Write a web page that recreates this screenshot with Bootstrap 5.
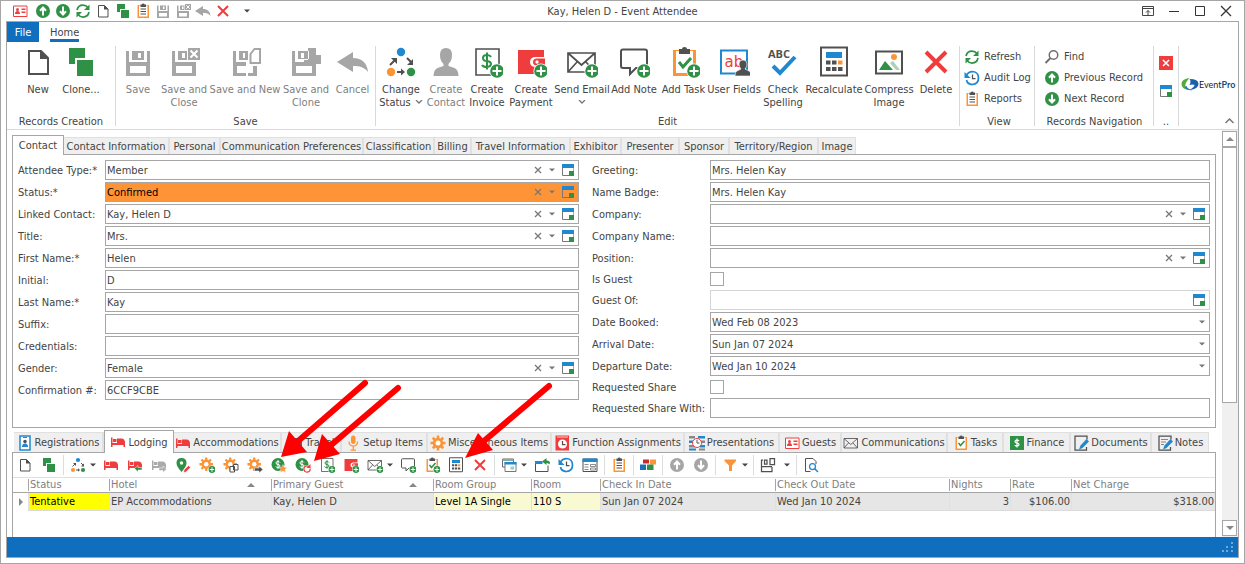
<!DOCTYPE html>
<html lang="en">
<head>
<meta charset="utf-8">
<meta name="viewport" content="width=device-width, initial-scale=1">
<title>Kay, Helen D - Event Attendee</title>
<link href="https://cdn.jsdelivr.net/npm/bootstrap@5.3.0/dist/css/bootstrap.min.css" rel="stylesheet">
<style>
:root{--edge:#a6a6a6;--ink:#444;--dim:#808080;--tab:#efefef;--soft:#d9d9d9;--brand:#106ebe}
body{font-family:"DejaVu Sans Condensed","DejaVu Sans",sans-serif;font-size:11px;line-height:13px;color:var(--ink);background:#fff}
svg{display:block;flex:none}
button{border:0;background:none;padding:0;color:inherit;line-height:13px}
.app-window{min-height:100vh;border:1px solid var(--edge);padding:0 5px 5px}
.i16{width:16px;height:16px}.i32{width:32px;height:32px}
.go{color:#2e9146}.stop{color:#ee3d3c}.idle{color:#a6a6a6}
.titlebar{height:20px;padding-left:4px}
.titlebar .quick{width:20px;height:20px;display:grid;place-items:center}
.titlebar .quick:first-child{margin-right:3px}
.titlebar .sys{width:26px;height:20px;display:grid;place-items:center}
.win-title{left:0;right:0;text-align:center;top:4px;pointer-events:none}
.app-frame{border:1px solid var(--edge)}
.file-tab{width:32px;height:20px;background:var(--brand);color:#fff}
.home-tab{height:20px;margin-left:11px;border-bottom:3px solid var(--brand);color:var(--ink);text-decoration:none;padding-top:4px}
.ribbon{height:88px;padding-top:4px;border-bottom:1px solid var(--soft)}
.ribbon-sep{width:1px;height:80px;background:var(--soft)}
.rgroup{height:82px;display:flex;flex-direction:column;justify-content:space-between}
.rgroup>.caption-line{text-align:center;white-space:nowrap}
.bigs{display:grid;padding:0 2px}
.bigs button{display:flex;flex-direction:column;align-items:center;white-space:nowrap;justify-self:center;width:0}
.bigs button svg{margin-bottom:5px}
.bigs button:disabled{color:var(--dim)}
.g-create .bigs{grid-template-columns:42px 44px;padding:0 12px 0 10px}
.g-save .bigs{grid-template-columns:40px 52px 70px 52px 41px}
.g-edit .bigs{grid-template-columns:46px 44px 38px 50px 52px 52px 47px 54px 44px 58px 52px 42px}
.smalls{display:grid;grid-auto-rows:21px}
.smalls button{display:flex;align-items:center;gap:4px;white-space:nowrap;text-align:left}
.g-view{width:74px;padding-left:4px}.g-nav{width:118px;padding-left:9px}.g-tiny{width:24px}
.tiny-stack{gap:14px;padding-top:10px}
.evp{font:9px Lato,sans-serif;color:#223;padding-left:2px}
.evp b{color:#184a86}
.workspace{padding:5px 6px 0 5px;min-width:0}
.strip{display:grid;position:relative;margin-bottom:-1px;z-index:1}
.strip a{display:flex;align-items:center;justify-content:center;gap:2px;white-space:nowrap;color:var(--ink);text-decoration:none;background:var(--tab);border-top:1px solid #e0e0e0;border-right:2px solid #e0e0e0;margin:2px 0 1px;min-width:0}
.strip a.current{background:#fff;border:1px solid var(--edge);border-bottom:0;margin:0}
.strip a:last-of-type{border-right-width:1px}
.strip-top{height:20px;grid-template-columns:52px 106px 51px 143px 71px 37px 99px 51px 58px 50px 89px 37px}
.strip-low{height:23px;padding-left:2px;grid-template-columns:90px 70px 108px 60px 86px 124px 133px 95px 62px 106px 56px 67px 81px 57px;margin-top:2px}
.page-box{border:1px solid var(--edge)}
.form-page{min-height:274px;padding:5px;display:grid;grid-template-columns:561fr 618fr;column-gap:13px;align-items:start}
.frow{display:grid;grid-template-columns:87px minmax(0,1fr);height:22px;align-items:start}
.fcol-right .frow{grid-template-columns:118px minmax(0,1fr)}
.frow.short{height:20px}
.frow>label{line-height:22px;white-space:nowrap}
.frow.short>label{line-height:20px}
.field{height:20px;border:1px solid var(--edge);display:flex;align-items:center;background:#fff}
.field input,.field select{appearance:none;border:0;outline:0;background:none;flex:1;min-width:0;height:18px;padding:0 0 0 1px;color:var(--ink);font:inherit}
.field.pale{border-color:#d4d4d4}
.field.hot{background:#ff9437}.field.hot select{color:#000}
.field button,.field .dd{width:14px;height:18px;display:grid;place-items:center;color:#777}
.field .pick{width:18px;margin-right:1px}
.tick{appearance:none;width:14px;height:14px;border:1px solid var(--edge);margin:2px 0 0;background:#fff}
.toolbar{height:25px;border-bottom:1px solid #e0e0e0}
.toolbar button{width:24px;height:24px;display:grid;place-items:center}
.toolbar .drop{width:9px;padding-right:5px}
.toolbar .drop.roomy{width:14px;padding-right:0}
.toolbar .bar{width:1px;height:20px;background:#dcdcdc;margin:0 2px}
.grid-table{table-layout:fixed;width:100%;border-collapse:separate;border-spacing:0}
.grid-table th{font-weight:400;color:var(--dim);height:15px;padding:0;border-bottom:1px solid var(--edge)}
.grid-table th>div{border-left:1px solid var(--edge);height:12px;line-height:12px;padding-left:1px;white-space:nowrap}
.grid-table th:first-child>div{border:0}
.grid-table td{height:18px;padding:0 1px;background:#e6e6e6;border-bottom:1px solid #dadada;border-left:1px solid #e0e0e0;white-space:nowrap}
.grid-table td:first-child{background:#fff;border:0;padding:0 0 0 5px}
.grid-table td.yellow{background:#ff0;color:#000}.grid-table td.cream{background:#fafad2;color:#000}
.c1{width:15px}.c2{width:81px}.c3,.c4{width:162px}.c5{width:98px}.c6{width:69px}.c7{width:175px}.c8{width:174px}.c9,.c10{width:61px}
.low-page{border-bottom:0}
.scroller{flex:none;width:16px;background:#f0f0f0;padding:1px 1px 1px 0}
.scroller button{height:16px;border:1px solid var(--edge);background:#fff;display:grid;place-items:center}
.scroller .thumb{flex:0 1 256px;border:1px solid var(--edge);background:#fff}
.statusbar{height:20px;background:var(--brand);padding:0 5px 4px}
.callouts{left:0;top:0;pointer-events:none;z-index:5}
</style>
</head>
<body>
<svg width="0" height="0" class="position-absolute" aria-hidden="true">
<defs>
<symbol id="plus" viewBox="0 0 32 32"><circle cx="26" cy="25" r="7.6" fill="#fff"/><circle cx="26" cy="25" r="6.8" fill="#2e9146"/><path d="M26 20.500v9M21.500 25h9" stroke="#fff" stroke-width="2"/></symbol>
<symbol id="new" viewBox="0 0 32 32"><path d="M7 5h12l7 7v16H7z" fill="#fff" stroke="#505050" stroke-width="2"/><path d="M18 4v9h9z" fill="#505050"/></symbol>
<symbol id="clone" viewBox="0 0 32 32"><path d="M4 2h16v10h-10v6H4z" fill="#2e9146"/><path d="M12 14h16v16H12z" fill="#2e9146"/></symbol>
<symbol id="save" viewBox="0 0 32 32"><path fill="#a6a6a6" fill-rule="evenodd" d="M4 5h3v11h18V5h3v25H4zM8 20v7h16v-7zM10 5h12v9H10zM16 7v5h3V7z"/></symbol>
<symbol id="saveclose" viewBox="0 0 32 32"><path fill="#a6a6a6" fill-rule="evenodd" d="M4 5h3v11h21v14H4zM8 20v7h16v-7zM10 5h9v9h-9zM14 7v5h3V7z"/><path fill="#a6a6a6" d="M20 2h12v12H20z"/><path d="M22.500 4.500l7 7m0-7l-7 7" stroke="#fff" stroke-width="2"/></symbol>
<symbol id="savenew" viewBox="0 0 32 32"><path fill="#a6a6a6" fill-rule="evenodd" d="M4 5h3v11h10v4H8v7h9v3H4zM10 5h9v9h-9zM14 7v5h2V7zM24 20h4v10h-9v-3h5z"/><path d="M21.500 8l4-5H31v14h-9.500z" fill="#fff" stroke="#a6a6a6" stroke-width="2"/></symbol>
<symbol id="saveclone" viewBox="0 0 32 32"><path fill="#a6a6a6" fill-rule="evenodd" d="M2 5h3v11h9v-2h4V2h8v7h5v9h-5v12H2zM6 20v7h16v-7zM8 5h11v8H8zM11 7v5h3V7z"/></symbol>
<symbol id="undo" viewBox="0 0 32 32"><path fill="#a6a6a6" d="M0 16L16 6v6c9 0 14 5 15 14-4-5-8-6-15-6v6z"/></symbol>
<symbol id="cross" viewBox="0 0 32 32"><path d="M6 6l20 20m0-20L6 26" stroke="#ee3d3c" stroke-width="4"/></symbol>
<symbol id="status" viewBox="0 0 32 32"><circle cx="16" cy="6" r="4.200" fill="#1f88cf"/><circle cx="6" cy="26" r="4.200" fill="#fb9437"/><circle cx="26" cy="26" r="4.200" fill="#2e9146"/><path d="M5 19l5-5M22 12l5 5M12 26h5" stroke="#505050" stroke-width="2"/><path d="M6 12h6v6zM28 13v6h-6zM16 22.500l4 3.500-4 3.500z" fill="#505050"/></symbol>
<symbol id="person" viewBox="0 0 32 32"><path fill="#a6a6a6" d="M10 9q0-7 6-7t6 7q0 6-3.500 9v2l6 2q4 2 4 8h-25q0-6 4-8l6-2v-2Q10 15 10 9z"/></symbol>
<symbol id="invoice" viewBox="0 0 32 32"><path d="M5 3h23v26H5z" fill="#fff" stroke="#505050" stroke-width="1.600"/><path d="M20 11q-1-2-4-2-4 0-4 3t4 3q4 .5 4 3t-4 3q-4 0-5-2M16 6.500v17" fill="none" stroke="#2e9146" stroke-width="2"/><use href="#plus"/></symbol>
<symbol id="wallet" viewBox="0 0 32 32"><path d="M3 4h26v24H3z" fill="#ee3d3c"/><path d="M30 11h-9q-6 0-6 5t6 5h9z" fill="#fff"/><path d="M30 12.500h-8q-4 0-4 3.500t4 3.500h8z" fill="#ee3d3c"/><circle cx="22" cy="16" r="1.700" fill="#fff"/><use href="#plus"/></symbol>
<symbol id="envelope" viewBox="0 0 32 32"><path d="M2 7h27v19H2zL15.500 19 29 7M2 26l9-10M29 26l-9-10" fill="none" stroke="#505050" stroke-width="1.700"/></symbol>
<symbol id="mail" viewBox="0 0 32 32"><use href="#envelope"/><use href="#plus"/></symbol>
<symbol id="note" viewBox="0 0 32 32"><path d="M5 3.500h22q2 0 2 2V20q0 2-2 2h-9l-6 6v-6H5q-2 0-2-2V5.500q0-2 2-2z" fill="#fff" stroke="#505050" stroke-width="2"/><use href="#plus"/></symbol>
<symbol id="board" viewBox="0 0 32 32"><path d="M5 4h23v26H5z" fill="#fb9437"/><path d="M8 5h17v22H8z" fill="#fff"/><path d="M11 3h3q0-2 2.500-2T19 3h3v5H11z" fill="#505050"/></symbol>
<symbol id="tasks" viewBox="0 0 32 32"><use href="#board"/><path d="M11 16l4 5 8-9" fill="none" stroke="#2e9146" stroke-width="3"/></symbol>
<symbol id="task" viewBox="0 0 32 32"><use href="#tasks"/><use href="#plus"/></symbol>
<symbol id="reports" viewBox="0 0 32 32"><use href="#board"/><path d="M11 12h11M11 17h11M11 22h11" stroke="#505050" stroke-width="2"/></symbol>
<symbol id="fields" viewBox="0 0 32 32"><path d="M3 4.500h26v23H3z" fill="#fff" stroke="#1f88cf" stroke-width="2"/><text x="6.500" y="21" font-family="DejaVu Sans" font-size="15" fill="#ee3d3c">ab</text><path fill="#505050" stroke="#fff" stroke-width=".6" d="M21 18q0-4 4-4t4 4q0 3-2 5l4 2q2 1 2 5H17q0-4 2-5l4-2q-2-2-2-5z"/></symbol>
<symbol id="spell" viewBox="0 0 32 32"><text x="1" y="12" font-family="Open Sans" font-weight="700" font-size="11" fill="#505050">ABC</text><path d="M6 20l7 7 15-16" fill="none" stroke="#1f88cf" stroke-width="4"/></symbol>
<symbol id="calc" viewBox="0 0 32 32"><path d="M3 1.500h26v28H3z" fill="#fff" stroke="#505050" stroke-width="2"/><path d="M8 6h16v6H8z" fill="#1f88cf"/><path d="M8 14.500h4.500v4H8zM14 14.500h4.500v4H14zM8 21h4.500v4H8zM14 21h4.500v4H14zM20 21h4.500v4H20z" fill="#505050"/><path d="M20 14.500h4.500v4H20z" fill="#fb9437"/></symbol>
<symbol id="image" viewBox="0 0 32 32"><path d="M3 5.500h26v22H3z" fill="#fff" stroke="#505050" stroke-width="2"/><path d="M6 24l6-9 8 9z" fill="#2e9146"/><path d="M17 17l3-2 7 9h-4z" fill="#a9d3b3"/><circle cx="21" cy="11" r="3" fill="#fb9437"/></symbol>
<symbol id="up" viewBox="0 0 32 32"><circle cx="16" cy="16" r="14" fill="currentColor"/><path d="M16 25V10M10 15.500L16 9l6 6.500" fill="none" stroke="#fff" stroke-width="4"/></symbol>
<symbol id="down" viewBox="0 0 32 32"><circle cx="16" cy="16" r="14" fill="currentColor"/><path d="M16 7v15M10 16.500L16 23l6-6.500" fill="none" stroke="#fff" stroke-width="4"/></symbol>
<symbol id="refresh" viewBox="0 0 32 32"><path d="M4 14q2-10 12-10 6 0 10 5M28 18q-2 10-12 10-6 0-10-5" fill="none" stroke="#2e9146" stroke-width="3.500"/><path d="M29 3v11H18zM3 29V18h11z" fill="#2e9146"/></symbol>
<symbol id="history" viewBox="0 0 32 32"><path d="M5 10q4-7 12-7 12 1 12 13T17 29Q7 29 5 20" fill="none" stroke="#1f88cf" stroke-width="3.500"/><path d="M1 4v12h12z" fill="#1f88cf"/><path d="M17 9v8h6" fill="none" stroke="#505050" stroke-width="2.500"/></symbol>
<symbol id="find" viewBox="0 0 32 32"><circle cx="19" cy="12" r="8.500" fill="none" stroke="#707070" stroke-width="3"/><path d="M13 18L3 28" stroke="#707070" stroke-width="4"/></symbol>
<symbol id="idcard" viewBox="0 0 32 32"><path d="M3 6h27v21H3z" fill="#fff" stroke="#ee3d3c" stroke-width="2"/><circle cx="11" cy="13" r="3" fill="#ee3d3c"/><path d="M6 22q0-6 5-6t5 6zM19 11h8v3h-8zM19 17h8v3h-8z" fill="#ee3d3c"/></symbol>
<symbol id="window" viewBox="0 0 14 14"><path d="M1 1h12v4H1z" fill="#1f88cf"/><path d="M1.500 5v7.500H8" fill="none" stroke="#777" stroke-width="1"/><path d="M12.500 5v3" stroke="#aaa"/><path d="M8 8h5v5H8z" fill="#2e9146"/></symbol>
<symbol id="caret" viewBox="0 0 6 4"><path d="M0 .5h6L3 3.500z" fill="currentColor"/></symbol>
<symbol id="tri" viewBox="0 0 8 4"><path d="M0 4h8L4 0z" fill="#888"/></symbol>
<symbol id="clear" viewBox="0 0 8 8"><path d="M1 1l6 6m0-6L1 7" stroke="#777" stroke-width="1.300"/></symbol>
<symbol id="bed" viewBox="0 0 32 32"><path d="M2 7h3v11h22v-3h3v11h-3v-4H5v4H2zM6 10h7v6H6zM14 9h9q7 0 7 9H14z" fill="currentColor"/></symbol>
<symbol id="bedin" viewBox="0 0 32 32"><g color="#ee3d3c"><use href="#bed"/></g><path d="M15 23l7-6v4h8v5h-8v4z" fill="#2e9146" stroke="#fff"/></symbol>
<symbol id="bedout" viewBox="0 0 32 32"><g color="#aaa"><use href="#bed"/></g><path d="M31 24l-7-6v4h-8v5h8v4z" fill="#aaa" stroke="#fff"/></symbol>
<symbol id="pin" viewBox="0 0 32 32"><path d="M13 30Q3 19 3 12 3 2 13 2t10 10q0 7-10 18z" fill="#2e9146"/><circle cx="13" cy="12" r="3.500" fill="#fff"/><path d="M18 26l9-9 4 4-9 9-5 1z" fill="#ee3d3c" stroke="#fff"/></symbol>
<symbol id="gear" viewBox="0 0 32 32"><g stroke="#fb9437" stroke-width="5"><path d="M16 1v30M1 16h30M5.500 5.500l21 21M26.500 5.500l-21 21"/></g><circle cx="16" cy="16" r="10.500" fill="#fb9437"/><circle cx="16" cy="16" r="5" fill="#fff"/></symbol>
<symbol id="gearplus" viewBox="0 0 32 32"><use href="#gear" width="29" height="29"/><use href="#plus"/></symbol>
<symbol id="gearcopy" viewBox="0 0 32 32"><use href="#gear" width="29" height="29"/><path d="M14 19h9v11h-9zM21 15h9v11h-9z" fill="#fff" stroke="#505050" stroke-width="2"/></symbol>
<symbol id="geargo" viewBox="0 0 32 32"><use href="#gear" width="29" height="29"/><path d="M32 25l-8-7v4h-9v6h9v4z" fill="#505050" stroke="#fff"/></symbol>
<symbol id="coin" viewBox="0 0 32 32"><circle cx="14" cy="15" r="13" fill="#2e9146"/><path d="M18 11q-1-2-4-2-4 0-4 3t4 3 4 3-4 3-4-2M14 6v18" fill="none" stroke="#fff" stroke-width="2"/></symbol>
<symbol id="coinstar" viewBox="0 0 32 32"><use href="#coin"/><path d="M24 15l2.500 5.500 6 .5-4.500 4 1.500 6-5.500-3-5.500 3 1.500-6-4.500-4 6-.5z" fill="#fb9437" stroke="#fff" stroke-width=".8"/></symbol>
<symbol id="coinredo" viewBox="0 0 32 32"><use href="#coin"/><circle cx="24" cy="24" r="8" fill="#fff"/><path d="M28 19q-5-3-9 1-3 5 1 9 5 3 9-1 2-2 1-5" fill="none" stroke="#ee3d3c" stroke-width="2.500"/><path d="M31 14v8h-8z" fill="#ee3d3c"/></symbol>
<symbol id="windows" viewBox="0 0 32 32"><path d="M3 4h22v16H3z" fill="#fff" stroke="#666" stroke-width="2"/><path d="M3 4h22v4H3z" fill="#8aa"/><path d="M8 11h22v18H8z" fill="#fff" stroke="#777" stroke-width="2"/><path d="M7 10h24v5H7z" fill="#1f88cf"/><path d="M19 19h7v6h-7z" fill="#9cc"/></symbol>
<symbol id="open" viewBox="0 0 32 32"><path d="M3 12v17h25V17" fill="none" stroke="#505050" stroke-width="2"/><path d="M2 8h15v6H2z" fill="#1f88cf"/><path d="M32 10q-3-4-7-3V2l-9 7 9 7v-4q4 0 6 3z" fill="#2e9146"/></symbol>
<symbol id="form" viewBox="0 0 32 32"><path d="M2 4h28v25H2z" fill="#fff" stroke="#505050" stroke-width="2"/><path d="M1 3h30v7H1z" fill="#1f88cf"/><path d="M5 15h8M5 20h8M5 25h8M17 15h10v4H17zM17 22h10v4H17z" fill="none" stroke="#666" stroke-width="1.500"/></symbol>
<symbol id="blocks" viewBox="0 0 32 32"><path d="M6 5h12v8H6z" fill="#c72b2b"/><path d="M20 5h12v10H20z" fill="#fb9437"/><path d="M0 15h12v11H0z" fill="#1b70b8"/><path d="M14 15h13v11H14z" fill="#2e9146"/></symbol>
<symbol id="funnel" viewBox="0 0 32 32"><path d="M5 5h23v3l-8 9v11h-6V17L5 8z" fill="#fb9437"/></symbol>
<symbol id="layout" viewBox="0 0 32 32"><path d="M6 6H3v23h21v-9M3 19h21M9 6v8h5V6zM20 3h9v12h-9z" fill="none" stroke="#505050" stroke-width="2.500"/></symbol>
<symbol id="preview" viewBox="0 0 32 32"><path d="M26 14V9l-6-6H5v26h10" fill="none" stroke="#505050" stroke-width="2"/><circle cx="19" cy="19" r="6" fill="#fff" stroke="#1f88cf" stroke-width="2.500"/><path d="M23 23l7 7" stroke="#1f88cf" stroke-width="3"/></symbol>
<symbol id="badge" viewBox="0 0 32 32"><path d="M6 2h20v28H6z" fill="#fff" stroke="#1f88cf" stroke-width="3"/><path d="M12 5h8" stroke="#1f88cf" stroke-width="2"/><circle cx="16" cy="13" r="3.500" fill="#505050"/><path d="M10 24q0-7 6-7t6 7z" fill="#1f88cf"/></symbol>
<symbol id="travel" viewBox="0 0 32 32"><path d="M4 6h8v20H4zM16 6h14v20H16z" fill="#1b70b8"/></symbol>
<symbol id="mic" viewBox="0 0 32 32"><rect x="12" y="1" width="9" height="17" rx="4.500" fill="#fb9437"/><path d="M8 13q0 9 8.500 9t8.500-9M16.500 22v8M11 30h11" fill="none" stroke="#fb9437" stroke-width="2.500"/></symbol>
<symbol id="clockbook" viewBox="0 0 32 32"><path d="M3 1h27v30H3z" fill="#ee3d3c"/><path d="M6 4h22" stroke="#fff" stroke-width="1.500"/><circle cx="17" cy="18" r="9" fill="#fff"/><path d="M17 12v7h6" fill="none" stroke="#505050" stroke-width="2.500"/></symbol>
<symbol id="present" viewBox="0 0 32 32"><path d="M0 2h12v5H0zM20 11h12v5H20zM0 20h12v5H0zM20 27h12v4H20z" fill="#888"/><path d="M18 2h14v5H18zM0 11h10v5H0zM22 20h10v5H22zM0 27h14v4H0z" fill="#1f88cf"/><circle cx="16" cy="16" r="9" fill="#fff" stroke="#ee3d3c" stroke-width="2"/><path d="M16 10v6h5" fill="none" stroke="#505050" stroke-width="2"/></symbol>
<symbol id="finance" viewBox="0 0 32 32"><path d="M2 2h28v28H2z" fill="#2e9146"/><path d="M20 12q-1-2-4-2-4 0-4 3t4 3 4 3-4 3-4-2M16 7v18" fill="none" stroke="#fff" stroke-width="2.500"/></symbol>
<symbol id="doc" viewBox="0 0 32 32"><path d="M28 9V2H4v28h23v-6" fill="none" stroke="#505050" stroke-width="2.500"/><path d="M12 29l3-8L27 8l5 5-13 13z" fill="#1f88cf"/></symbol>
<symbol id="notes" viewBox="0 0 32 32"><use href="#doc"/><path d="M8 9h14M8 14h10M8 19h6" stroke="#888" stroke-width="2"/></symbol>
</defs>
</svg>

<div class="app-window d-flex flex-column position-relative">
  <header class="titlebar d-flex align-items-center">
    <button class="quick" aria-label="Attendee"><svg class="i16"><use href="#idcard"/></svg></button>
    <button class="quick go" aria-label="Previous"><svg class="i16"><use href="#up"/></svg></button>
    <button class="quick go" aria-label="Next"><svg class="i16"><use href="#down"/></svg></button>
    <button class="quick" aria-label="Refresh"><svg class="i16"><use href="#refresh"/></svg></button>
    <button class="quick" aria-label="New"><svg class="i16"><use href="#new"/></svg></button>
    <button class="quick" aria-label="Clone"><svg class="i16"><use href="#clone"/></svg></button>
    <button class="quick" aria-label="Reports"><svg class="i16"><use href="#reports"/></svg></button>
    <button class="quick" aria-label="Save"><svg class="i16"><use href="#save"/></svg></button>
    <button class="quick" aria-label="Save and Close"><svg class="i16"><use href="#saveclose"/></svg></button>
    <button class="quick" aria-label="Undo"><svg class="i16"><use href="#undo"/></svg></button>
    <button class="quick" aria-label="Delete"><svg class="i16"><use href="#cross"/></svg></button>
    <button class="quick ms-1" aria-label="More"><svg width="6" height="4"><use href="#caret"/></svg></button>
    <div class="win-title position-absolute">Kay, Helen D - Event Attendee</div>
    <div class="ms-auto d-flex">
      <button class="sys" aria-label="Ribbon options"><svg width="12" height="12" viewBox="0 0 12 12" fill="none" stroke="#444"><path d="M.5 1.500h11v9H.5zM.5 3.500h11M6 10V5.500M4 7.500l2-2 2 2"/></svg></button>
      <button class="sys" aria-label="Minimize"><svg width="12" height="12" viewBox="0 0 12 12" stroke="#333"><path d="M1 6.500h10"/></svg></button>
      <button class="sys" aria-label="Maximize"><svg width="12" height="12" viewBox="0 0 12 12" fill="none" stroke="#333"><path d="M1.500 1.500h9v9h-9z"/></svg></button>
      <button class="sys" aria-label="Close"><svg width="12" height="12" viewBox="0 0 12 12" stroke="#333" stroke-width="1.300"><path d="M1 1l10 10M11 1L1 11"/></svg></button>
    </div>
  </header>

  <div class="app-frame flex-grow-1 d-flex flex-column">
    <nav class="d-flex">
      <button class="file-tab">File</button>
      <a href="#" class="home-tab">Home</a>
    </nav>
    <section class="ribbon d-flex">
      <div class="rgroup g-create">
        <div class="bigs">
          <button><svg class="i32"><use href="#new"/></svg>New</button>
          <button><svg class="i32"><use href="#clone"/></svg>Clone...</button>
        </div>
        <div class="caption-line">Records Creation</div>
      </div>
      <div class="ribbon-sep"></div>
      <div class="rgroup g-save">
        <div class="bigs">
          <button disabled><svg class="i32"><use href="#save"/></svg>Save</button>
          <button disabled><svg class="i32"><use href="#saveclose"/></svg><span>Save and<br>Close</span></button>
          <button disabled><svg class="i32"><use href="#savenew"/></svg>Save and New</button>
          <button disabled><svg class="i32"><use href="#saveclone"/></svg><span>Save and<br>Clone</span></button>
          <button disabled><svg class="i32"><use href="#undo"/></svg>Cancel</button>
        </div>
        <div class="caption-line">Save</div>
      </div>
      <div class="ribbon-sep"></div>
      <div class="rgroup g-edit">
        <div class="bigs">
          <button><svg class="i32"><use href="#status"/></svg><span>Change</span><span class="d-flex align-items-center gap-1">Status <svg class="m-0" width="8" height="5" viewBox="0 0 8 5" fill="none" stroke="#777" stroke-width="1.300"><path d="M1 0l3 3 3-3"/></svg></span></button>
          <button disabled><svg class="i32"><use href="#person"/></svg><span>Create<br>Contact</span></button>
          <button><svg class="i32"><use href="#invoice"/></svg><span>Create<br>Invoice</span></button>
          <button><svg class="i32"><use href="#wallet"/></svg><span>Create<br>Payment</span></button>
          <button><svg class="i32"><use href="#mail"/></svg>Send Email<svg class="mt-1" width="8" height="5" viewBox="0 0 8 5" fill="none" stroke="#777" stroke-width="1.300"><path d="M1 0l3 3 3-3"/></svg></button>
          <button><svg class="i32"><use href="#note"/></svg>Add Note</button>
          <button><svg class="i32"><use href="#task"/></svg>Add Task</button>
          <button><svg class="i32"><use href="#fields"/></svg>User Fields</button>
          <button><svg class="i32"><use href="#spell"/></svg><span>Check<br>Spelling</span></button>
          <button><svg class="i32"><use href="#calc"/></svg>Recalculate</button>
          <button><svg class="i32"><use href="#image"/></svg><span>Compress<br>Image</span></button>
          <button><svg class="i32"><use href="#cross"/></svg>Delete</button>
        </div>
        <div class="caption-line">Edit</div>
      </div>
      <div class="ribbon-sep"></div>
      <div class="rgroup g-view">
        <div class="smalls">
          <button><svg class="i16"><use href="#refresh"/></svg>Refresh</button>
          <button><svg class="i16"><use href="#history"/></svg>Audit Log</button>
          <button><svg class="i16"><use href="#reports"/></svg>Reports</button>
        </div>
        <div class="caption-line">View</div>
      </div>
      <div class="ribbon-sep"></div>
      <div class="rgroup g-nav">
        <div class="smalls">
          <button><svg class="i16"><use href="#find"/></svg>Find</button>
          <button><svg class="i16 go"><use href="#up"/></svg>Previous Record</button>
          <button><svg class="i16 go"><use href="#down"/></svg>Next Record</button>
        </div>
        <div class="caption-line pe-2">Records Navigation</div>
      </div>
      <div class="ribbon-sep"></div>
      <div class="rgroup g-tiny">
        <div class="tiny-stack d-flex flex-column align-items-center">
          <button aria-label="Close record"><svg width="14" height="14" viewBox="0 0 14 14"><path d="M0 0h14v14H0z" fill="#ee3d3c"/><path d="M4 4l6 6m0-6l-6 6" stroke="#fff" stroke-width="1.600"/></svg></button>
          <button aria-label="Open window"><svg width="14" height="14"><use href="#window"/></svg></button>
        </div>
        <div class="caption-line">..</div>
      </div>
      <div class="ribbon-sep"></div>
      <div class="rgroup flex-grow-1 align-items-end">
        <div class="d-flex align-items-center evp w-100 pt-4 mt-2">
          <svg width="18" height="13" viewBox="0 0 17 13"><path d="M8 0Q0 1 0 6t7 6q-4-3-3-6t4-6z" fill="#58a83c"/><path d="M3 9q3 4 8 3-5-1-6-4z" fill="#2a7ac0"/><path d="M8 1q9 0 9 5t-9 6q5-3 5-5-2-1-5 0 2-4 0-6z" fill="#1a5fa8"/></svg>
          <span>Event<b>Pro</b></span>
        </div>
        <button class="p-1" aria-label="Collapse ribbon"><svg width="9" height="6" viewBox="0 0 9 6" fill="none" stroke="#777" stroke-width="1.500"><path d="M.5 5l4-4 4 4"/></svg></button>
      </div>
    </section>

    <main class="d-flex flex-grow-1">
      <div class="workspace flex-grow-1 d-flex flex-column">
        <nav class="strip strip-top">
          <a href="#" class="current">Contact</a><a href="#">Contact Information</a><a href="#">Personal</a><a href="#">Communication Preferences</a><a href="#">Classification</a><a href="#">Billing</a><a href="#">Travel Information</a><a href="#">Exhibitor</a><a href="#">Presenter</a><a href="#">Sponsor</a><a href="#">Territory/Region</a><a href="#">Image</a>
        </nav>
        <form class="page-box form-page">
          <div>
            <div class="frow"><label for="f1">Attendee Type:*</label><div class="field"><select id="f1"><option>Member</option></select><button type="button" aria-label="Clear"><svg width="8" height="8"><use href="#clear"/></svg></button><span class="dd"><svg width="6" height="4"><use href="#caret"/></svg></span><button type="button" class="pick" aria-label="Open"><svg width="14" height="14"><use href="#window"/></svg></button></div></div>
            <div class="frow"><label for="f2">Status:*</label><div class="field hot"><select id="f2"><option>Confirmed</option></select><button type="button" aria-label="Clear"><svg width="8" height="8"><use href="#clear"/></svg></button><span class="dd"><svg width="6" height="4"><use href="#caret"/></svg></span><button type="button" class="pick" aria-label="Open"><svg width="14" height="14"><use href="#window"/></svg></button></div></div>
            <div class="frow"><label for="f3">Linked Contact:</label><div class="field"><select id="f3"><option>Kay, Helen D</option></select><button type="button" aria-label="Clear"><svg width="8" height="8"><use href="#clear"/></svg></button><span class="dd"><svg width="6" height="4"><use href="#caret"/></svg></span><button type="button" class="pick" aria-label="Open"><svg width="14" height="14"><use href="#window"/></svg></button></div></div>
            <div class="frow"><label for="f4">Title:</label><div class="field"><select id="f4"><option>Mrs.</option></select><button type="button" aria-label="Clear"><svg width="8" height="8"><use href="#clear"/></svg></button><span class="dd"><svg width="6" height="4"><use href="#caret"/></svg></span><button type="button" class="pick" aria-label="Open"><svg width="14" height="14"><use href="#window"/></svg></button></div></div>
            <div class="frow"><label for="f5">First Name:*</label><div class="field"><input id="f5" value="Helen"></div></div>
            <div class="frow"><label for="f6">Initial:</label><div class="field"><input id="f6" value="D"></div></div>
            <div class="frow"><label for="f7">Last Name:*</label><div class="field"><input id="f7" value="Kay"></div></div>
            <div class="frow"><label for="f8">Suffix:</label><div class="field"><input id="f8"></div></div>
            <div class="frow"><label for="f9">Credentials:</label><div class="field"><input id="f9"></div></div>
            <div class="frow"><label for="f10">Gender:</label><div class="field"><select id="f10"><option>Female</option></select><button type="button" aria-label="Clear"><svg width="8" height="8"><use href="#clear"/></svg></button><span class="dd"><svg width="6" height="4"><use href="#caret"/></svg></span><button type="button" class="pick" aria-label="Open"><svg width="14" height="14"><use href="#window"/></svg></button></div></div>
            <div class="frow"><label for="f11">Confirmation #:</label><div class="field"><input id="f11" value="6CCF9CBE"></div></div>
          </div>
          <div class="fcol-right">
            <div class="frow"><label for="r1">Greeting:</label><div class="field"><input id="r1" value="Mrs. Helen Kay"></div></div>
            <div class="frow"><label for="r2">Name Badge:</label><div class="field"><input id="r2" value="Mrs. Helen Kay"></div></div>
            <div class="frow"><label for="r3">Company:</label><div class="field"><select id="r3"><option></option></select><button type="button" aria-label="Clear"><svg width="8" height="8"><use href="#clear"/></svg></button><span class="dd"><svg width="6" height="4"><use href="#caret"/></svg></span><button type="button" class="pick" aria-label="Open"><svg width="14" height="14"><use href="#window"/></svg></button></div></div>
            <div class="frow"><label for="r4">Company Name:</label><div class="field"><input id="r4"></div></div>
            <div class="frow"><label for="r5">Position:</label><div class="field"><select id="r5"><option></option></select><button type="button" aria-label="Clear"><svg width="8" height="8"><use href="#clear"/></svg></button><span class="dd"><svg width="6" height="4"><use href="#caret"/></svg></span><button type="button" class="pick" aria-label="Open"><svg width="14" height="14"><use href="#window"/></svg></button></div></div>
            <div class="frow short"><label for="r6">Is Guest</label><input type="checkbox" class="tick" id="r6"></div>
            <div class="frow"><label for="r7">Guest Of:</label><div class="field pale"><input id="r7"><button type="button" class="pick" aria-label="Open"><svg width="14" height="14"><use href="#window"/></svg></button></div></div>
            <div class="frow"><label for="r8">Date Booked:</label><div class="field"><select id="r8"><option>Wed Feb 08 2023</option></select><span class="dd"><svg width="6" height="4"><use href="#caret"/></svg></span></div></div>
            <div class="frow"><label for="r9">Arrival Date:</label><div class="field"><select id="r9"><option>Sun Jan 07 2024</option></select><span class="dd"><svg width="6" height="4"><use href="#caret"/></svg></span></div></div>
            <div class="frow"><label for="r10">Departure Date:</label><div class="field"><select id="r10"><option>Wed Jan 10 2024</option></select><span class="dd"><svg width="6" height="4"><use href="#caret"/></svg></span></div></div>
            <div class="frow short"><label for="r11">Requested Share</label><input type="checkbox" class="tick" id="r11"></div>
            <div class="frow"><label for="r12">Requested Share With:</label><div class="field"><input id="r12"></div></div>
          </div>
        </form>

        <nav class="strip strip-low">
          <a href="#"><svg class="i16"><use href="#badge"/></svg>Registrations</a>
          <a href="#" class="current"><svg class="i16 stop"><use href="#bed"/></svg>Lodging</a>
          <a href="#"><svg class="i16 stop"><use href="#bed"/></svg>Accommodations</a>
          <a href="#"><svg class="i16"><use href="#travel"/></svg>Travel</a>
          <a href="#"><svg class="i16"><use href="#mic"/></svg>Setup Items</a>
          <a href="#"><svg class="i16"><use href="#gear"/></svg>Miscellaneous Items</a>
          <a href="#"><svg class="i16"><use href="#clockbook"/></svg>Function Assignments</a>
          <a href="#"><svg class="i16"><use href="#present"/></svg>Presentations</a>
          <a href="#"><svg class="i16"><use href="#idcard"/></svg>Guests</a>
          <a href="#"><svg class="i16"><use href="#envelope"/></svg>Communications</a>
          <a href="#"><svg class="i16"><use href="#tasks"/></svg>Tasks</a>
          <a href="#"><svg class="i16"><use href="#finance"/></svg>Finance</a>
          <a href="#"><svg class="i16"><use href="#doc"/></svg>Documents</a>
          <a href="#"><svg class="i16"><use href="#notes"/></svg>Notes</a>
        </nav>
        <div class="page-box low-page flex-grow-1">
          <div class="toolbar d-flex align-items-center">
            <button aria-label="New"><svg class="i16"><use href="#new"/></svg></button>
            <button aria-label="Clone"><svg class="i16"><use href="#clone"/></svg></button>
            <span class="bar"></span>
            <button aria-label="Change status"><svg class="i16"><use href="#status"/></svg></button><button class="drop" aria-label="Status menu"><svg width="6" height="4"><use href="#caret"/></svg></button>
            <button class="stop" aria-label="Lodging"><svg class="i16"><use href="#bed"/></svg></button>
            <button aria-label="Check in"><svg class="i16"><use href="#bedin"/></svg></button>
            <button aria-label="Check out"><svg class="i16"><use href="#bedout"/></svg></button>
            <button aria-label="Edit place"><svg class="i16"><use href="#pin"/></svg></button>
            <button aria-label="Add item"><svg class="i16"><use href="#gearplus"/></svg></button>
            <button aria-label="Copy item"><svg class="i16"><use href="#gearcopy"/></svg></button>
            <button aria-label="Move item"><svg class="i16"><use href="#geargo"/></svg></button>
            <button aria-label="Special rate"><svg class="i16"><use href="#coinstar"/></svg></button>
            <button aria-label="Refresh rate"><svg class="i16"><use href="#coinredo"/></svg></button>
            <button aria-label="Create invoice"><svg class="i16"><use href="#invoice"/></svg></button>
            <button aria-label="Create payment"><svg class="i16"><use href="#wallet"/></svg></button>
            <button aria-label="Send email"><svg class="i16"><use href="#mail"/></svg></button><button class="drop" aria-label="Email menu"><svg width="6" height="4"><use href="#caret"/></svg></button>
            <button aria-label="Add note"><svg class="i16"><use href="#note"/></svg></button>
            <button aria-label="Add task"><svg class="i16"><use href="#task"/></svg></button>
            <button aria-label="Recalculate"><svg class="i16"><use href="#calc"/></svg></button>
            <button aria-label="Delete"><svg class="i16"><use href="#cross"/></svg></button>
            <span class="bar"></span>
            <button aria-label="Windows"><svg class="i16"><use href="#windows"/></svg></button><button class="drop" aria-label="Window menu"><svg width="6" height="4"><use href="#caret"/></svg></button>
            <button aria-label="Open"><svg class="i16"><use href="#open"/></svg></button>
            <button aria-label="Audit log"><svg class="i16"><use href="#history"/></svg></button>
            <button aria-label="Form"><svg class="i16"><use href="#form"/></svg></button>
            <span class="bar"></span>
            <button aria-label="Reports"><svg class="i16"><use href="#reports"/></svg></button>
            <span class="bar"></span>
            <button aria-label="Blocks"><svg class="i16"><use href="#blocks"/></svg></button>
            <span class="bar"></span>
            <button class="idle" aria-label="Up"><svg class="i16"><use href="#up"/></svg></button>
            <button class="idle" aria-label="Down"><svg class="i16"><use href="#down"/></svg></button>
            <span class="bar"></span>
            <button aria-label="Filter"><svg class="i16"><use href="#funnel"/></svg></button><button class="drop" aria-label="Filter menu"><svg width="6" height="4"><use href="#caret"/></svg></button>
            <span class="bar"></span>
            <button aria-label="Layout"><svg class="i16"><use href="#layout"/></svg></button><button class="drop roomy" aria-label="Layout menu"><svg width="6" height="4"><use href="#caret"/></svg></button>
            <span class="bar"></span>
            <button aria-label="Preview"><svg class="i16"><use href="#preview"/></svg></button>
          </div>
          <table class="grid-table">
            <colgroup><col class="c1"><col class="c2"><col class="c3"><col class="c4"><col class="c5"><col class="c6"><col class="c7"><col class="c8"><col class="c9"><col class="c10"><col></colgroup>
            <thead><tr>
              <th><div></div></th><th><div>Status</div></th>
              <th><div class="d-flex justify-content-between align-items-center pe-3">Hotel<svg width="8" height="4"><use href="#tri"/></svg></div></th>
              <th><div class="d-flex justify-content-between align-items-center pe-3">Primary Guest<svg width="8" height="4"><use href="#tri"/></svg></div></th>
              <th><div>Room Group</div></th><th><div>Room</div></th><th><div>Check In Date</div></th><th><div>Check Out Date</div></th><th><div>Nights</div></th><th><div>Rate</div></th><th><div>Net Charge</div></th>
            </tr></thead>
            <tbody><tr>
              <td><svg width="5" height="8" viewBox="0 0 5 8"><path d="M1 0l4 4-4 4z" fill="#888"/></svg></td><td class="yellow">Tentative</td><td>EP Accommodations</td><td>Kay, Helen D</td><td class="cream">Level 1A Single</td><td class="cream">110 S</td><td>Sun Jan 07 2024</td><td>Wed Jan 10 2024</td><td class="text-end">3</td><td class="text-end">$106.00</td><td class="text-end">$318.00</td>
            </tr></tbody>
          </table>
        </div>
      </div>
      <aside class="scroller d-flex flex-column">
        <button aria-label="Scroll up"><svg width="8" height="4"><use href="#tri"/></svg></button>
        <div class="thumb"></div>
        <button class="mt-auto" aria-label="Scroll down"><svg width="8" height="4" viewBox="0 0 8 4"><path d="M0 0h8L4 4z" fill="#888"/></svg></button>
      </aside>
    </main>
    <footer class="statusbar d-flex justify-content-end align-items-end">
      <svg width="11" height="11" viewBox="0 0 11 11" fill="#6fa9da"><path d="M9 0h2v2H9zM4 4h2v2H4zM9 4h2v2H9zM0 8h2v2H0zM4 8h2v2H4zM9 8h2v2H9z"/></svg>
    </footer>
  </div>

  <svg class="callouts position-absolute" width="1245" height="564" viewBox="1 1 1245 564" fill="red" stroke="red" aria-hidden="true">
    <path d="M365 383L297 442M398 388L330 446M549 386L484 441" stroke-width="6" stroke-linecap="round"/>
    <path stroke="none" d="M281 457l8-26 18 21zM314 461l8-27 18 20zM465 458l13-25 15 17z"/>
  </svg>
</div>
<script src="https://cdn.jsdelivr.net/npm/bootstrap@5.3.0/dist/js/bootstrap.bundle.min.js"></script>
</body>
</html>
